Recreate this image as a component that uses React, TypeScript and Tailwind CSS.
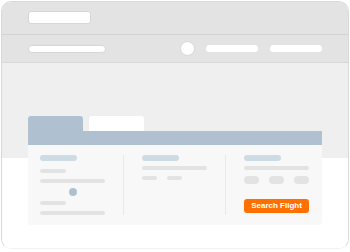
import React from 'react';

const Bar: React.FC<{ className: string }> = ({ className }) => <div className={`rounded-full ${className}`} />;

const App: React.FC = () => {
  return (
    <div className="w-[350px] h-[252px] overflow-hidden bg-white p-px" style={{ fontFamily: '"Liberation Sans", Arial, sans-serif' }}>
      <div className="h-[248px] rounded-[10px] border border-[#d9d9d9] border-b-[#f2f2f2] overflow-hidden flex flex-col">
        {/* browser top bar */}
        <div className="h-[33px] shrink-0 bg-[#e3e3e3] border-b border-[#d3d3d3] pl-[26px] pt-[9px]">
          <div className="w-[63px] h-[13px] rounded-[3px] bg-white border border-[#d6d6d6]" />
        </div>

        {/* site nav */}
        <div className="h-[28px] shrink-0 bg-[#e3e3e3] border-b border-[#d8d8d8] flex items-center pl-[26px] pr-[26px]">
          <div className="w-[78px] h-[8px] rounded-full bg-white border border-[#d6d6d6]" />
          <div className="ml-auto w-[15px] h-[15px] rounded-full bg-white border border-[#d6d6d6]" />
          <div className="ml-[11px] w-[52px] h-[7px] rounded-full bg-white" />
          <div className="ml-[12px] w-[52px] h-[7px] rounded-full bg-white" />
        </div>

        {/* page body */}
        <div className="flex-1 bg-[linear-gradient(#efefef_0_95px,#ffffff_95px)] pt-[53px] px-[26px]">
          <div className="flex gap-[6px]">
            <div className="w-[55px] h-[15px] rounded-t-[3px] bg-[#afc1d0]" />
            <div className="w-[55px] h-[15px] rounded-t-[3px] bg-white" />
          </div>
          <div className="h-[14px] bg-[#afc1d0]" />
          <div className="h-[80px] rounded-b-[3px] bg-[#f8f8f8] flex pt-[10px] pb-[10px] pl-[12px]">
            {/* from / to */}
            <div className="w-[83px] flex flex-col">
              <Bar className="w-[37px] h-[6px] bg-[#cddbe4]" />
              <Bar className="mt-[8px] w-[26px] h-[4px] bg-[#e3e3e3]" />
              <Bar className="mt-[6px] w-[65px] h-[4px] bg-[#e3e3e3]" />
              <div className="mt-[5px] w-[65px] flex justify-center">
                <div className="w-[8px] h-[8px] rounded-full bg-[#afc1d0]" />
              </div>
              <Bar className="mt-[5px] w-[26px] h-[4px] bg-[#e3e3e3]" />
              <Bar className="mt-[6px] w-[65px] h-[4px] bg-[#e3e3e3]" />
            </div>

            {/* dates */}
            <div className="w-[102px] border-l border-[#e9e9e9] pl-[18px] flex flex-col">
              <Bar className="w-[37px] h-[6px] bg-[#cddbe4]" />
              <Bar className="mt-[5px] w-[65px] h-[4px] bg-[#e3e3e3]" />
              <div className="mt-[6px] flex gap-[10px]">
                <Bar className="w-[15px] h-[4px] bg-[#e3e3e3]" />
                <Bar className="w-[15px] h-[4px] bg-[#e3e3e3]" />
              </div>
            </div>

            {/* passengers + search */}
            <div className="border-l border-[#e9e9e9] pl-[18px] flex flex-col">
              <Bar className="w-[37px] h-[6px] bg-[#cddbe4]" />
              <Bar className="mt-[5px] w-[65px] h-[4px] bg-[#e3e3e3]" />
              <div className="mt-[6px] flex gap-[10px]">
                <Bar className="w-[15px] h-[8px] bg-[#e3e3e3]" />
                <Bar className="w-[15px] h-[8px] bg-[#e3e3e3]" />
                <Bar className="w-[15px] h-[8px] bg-[#e3e3e3]" />
              </div>
              <button className="mt-[15px] w-[65px] h-[14px] rounded-[3px] bg-[#ff7000] text-white text-[8px] font-bold leading-none flex items-center justify-center">
                Search Flight
              </button>
            </div>
          </div>
        </div>
      </div>
    </div>
  );
};

export default App;
